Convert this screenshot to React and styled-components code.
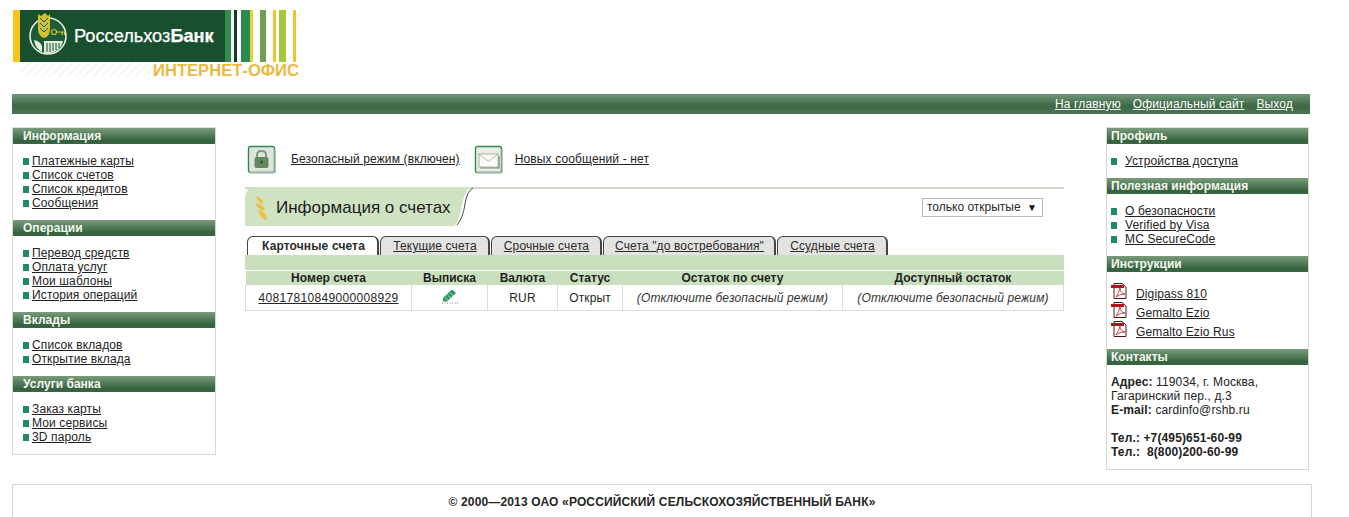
import styled, { createGlobalStyle } from "styled-components";

const GlobalStyle = createGlobalStyle`
  html, body {
    margin: 0;
    padding: 0;
    background: #fff;
    overflow: hidden;
  }

  body {
    font-family: "Liberation Sans", Arial, sans-serif;
    font-size: 12px;
    letter-spacing: 0.13px;
    color: #222;
  }

  a {
    color: inherit;
    text-decoration: underline;
  }
`;

const Page = styled.div`
  width: 1349px;
  height: 517px;
  overflow: hidden;
`;

const Header = styled.header`
  height: 94px;
  padding: 10px 0 0 13px;
  box-sizing: border-box;
`;

const TopBar = styled.nav`
  margin-left: 12px;
  width: 1298px;
  height: 20px;
  display: flex;
  justify-content: flex-end;
  align-items: center;
  gap: 12px;
  padding-right: 17px;
  box-sizing: border-box;
  color: #fff;
  background: linear-gradient(#70967a, #3c6844 60%, #4c7553);
`;

const Columns = styled.div`
  display: flex;
  align-items: flex-start;
  margin: 13px 0 0 12px;
`;

const Sidebar = styled.aside`
  flex: none;
  width: ${(p) => p.$width}px;
  box-sizing: border-box;
  border: 1px solid #d6d9cb;
  border-top-color: #dfe2d6;
  padding-bottom: ${(p) => p.$pad}px;
`;

const PanelTitle = styled.h3`
  margin: 0;
  height: 16px;
  line-height: 16px;
  padding-left: ${(p) => p.$indent}px;
  font-size: 12px;
  font-weight: bold;
  letter-spacing: 0.03px;
  color: #f2f6ee;
  background: linear-gradient(#7a9c7c, #35623e 80%, #3a6642);
`;

const LinkList = styled.ul`
  list-style: none;
  margin: 0;
  padding: 10px 0 10px ${(p) => p.$indent}px;
`;

const LinkItem = styled.li`
  display: flex;
  align-items: center;
  height: 14px;
  line-height: 14px;
`;

const Bullet = styled.i`
  flex: none;
  width: 6px;
  height: 7px;
  margin-right: ${(p) => p.$gap}px;
  background: #1f8a63;
`;

const PdfList = styled.ul`
  list-style: none;
  margin: 0;
  padding: 8px 0 12px 4px;
`;

const PdfItem = styled.li`
  display: flex;
  align-items: flex-end;
  gap: 8px;
  height: 19px;
  line-height: 14px;

  a {
    margin-bottom: -2px;
  }
`;

const Contacts = styled.div`
  padding: 10px 0 0 4px;
  line-height: 14px;

  b {
    font-weight: bold;
  }
`;

const Center = styled.main`
  flex: none;
  width: 819px;
  margin: 17px 42px 0 29px;
`;

const StatusRow = styled.div`
  display: flex;
  align-items: center;
  height: 30px;
  padding-left: 2px;
`;

const StatusIcon = styled.span`
  flex: none;
  display: flex;
  width: 29px;
  height: 29px;
  margin-right: ${(p) => p.$gap}px;
`;

const StatusLink = styled.a`
  margin-right: ${(p) => p.$gap}px;
`;

const TitleRow = styled.div`
  position: relative;
  display: flex;
  align-items: center;
  justify-content: space-between;
  margin-top: 13px;
  height: 39px;
  border-top: 2px solid #d3d7c7;
  box-sizing: border-box;
`;

const TitleTab = styled.div`
  display: flex;
  align-items: center;
  gap: 7px;
  height: 37px;
  width: 228px;
  padding-left: 9px;
  box-sizing: border-box;
  font-size: 17px;
  letter-spacing: 0;
  color: #1d1d1d;
`;

const TitleShape = styled.svg`
  position: absolute;
  left: 0;
  top: -2px;
  z-index: 0;
`;

const TitleInner = styled.span`
  position: relative;
  z-index: 1;
  display: flex;
  align-items: center;
`;

const FilterSelect = styled.div`
  display: flex;
  align-items: center;
  justify-content: space-between;
  width: 121px;
  height: 19px;
  margin: -1px 21px 0 0;
  padding: 0 5px 0 4px;
  box-sizing: border-box;
  border: 1px solid #b9b9b9;
  color: #2a2a2a;
  letter-spacing: 0;

  span {
    font-size: 10px;
    color: #111;
  }
`;

const Tabs = styled.div`
  display: flex;
  gap: 1px;
  margin: 10px 0 0 2px;
  height: 19px;
`;

const Tab = styled.a`
  display: block;
  height: 19px;
  line-height: 19px;
  box-sizing: border-box;
  width: ${(p) => p.$width}px;
  padding-left: ${(p) => (p.$active ? 2 : 1)}px;
  text-align: center;
  border: 1px solid #444;
  border-bottom: none;
  border-width: 1px 2px 0 1px;
  border-radius: 6px 6px 0 0;
  background: ${(p) => (p.$active ? "#fff" : "#e3e4e2")};
  font-weight: ${(p) => (p.$active ? "bold" : "normal")};
  text-decoration: ${(p) => (p.$active ? "none" : "underline")};
  color: #2b2b2b;
`;

const Band = styled.div`
  height: 15px;
  background: #c9dfbd;
`;

const AccountTable = styled.table`
  width: 818px;
  table-layout: fixed;
  border-collapse: collapse;
  margin-top: 1px;

  th {
    height: 14px;
    padding: 0;
    font-size: 12px;
    line-height: 14px;
    font-weight: bold;
    letter-spacing: 0.03px;
    color: #1f1f1f;
    background: #c9dfbd;
  }

  td {
    height: 25px;
    padding: 0;
    text-align: center;
    color: #262626;
    border: 1px solid #d9dcd2;
    border-top: none;
  }

  td em {
    color: #333;
  }
`;

const AccountNumber = styled.a`
  letter-spacing: 0.33px;
`;

const Footer = styled.footer`
  width: 1300px;
  height: 40px;
  margin: 14px 0 0 12px;
  padding-top: 10px;
  box-sizing: border-box;
  border: 1px solid #d6d9cb;
  text-align: center;
  font-weight: bold;
  letter-spacing: 0.15px;
  color: #262626;
`;

function Logo() {
  return (
    <svg width="300" height="70" viewBox="0 0 300 70">
      <defs>
        <pattern id="hatch" width="6" height="6" patternUnits="userSpaceOnUse" patternTransform="rotate(45)">
          <rect width="3" height="6" fill="#f8f9f6" />
        </pattern>
      </defs>
      <polygon points="283,0 295,0 283,18" fill="url(#hatch)" />
      <rect x="8" y="52" width="140" height="15" fill="url(#hatch)" />
      <rect x="0" y="0" width="7" height="52" fill="#f7c417" />
      <rect x="7" y="0" width="205" height="52" fill="#18502f" />
      <rect x="212" y="0" width="6" height="52" fill="#2f8f4a" />
      <rect x="221" y="0" width="3" height="52" fill="#15382a" />
      <rect x="228" y="0" width="9" height="52" fill="#2a8a4c" />
      <rect x="237" y="0" width="3" height="52" fill="#e9cf3b" />
      <rect x="247" y="0" width="6" height="52" fill="#6f9e54" />
      <rect x="260" y="0" width="3" height="52" fill="#f4c32c" />
      <rect x="266" y="0" width="7" height="52" fill="#a3c83c" />
      <rect x="280" y="0" width="3" height="52" fill="#f4c32c" />

      <circle cx="35" cy="26" r="18" fill="#1d5a35" stroke="#e4efe0" strokeWidth="1.6" />
      <path d="M25 4 L28 6 L32 3 L35 6 L37 4 V18 Q37 27 31 28 Q25 26 25 18 Z" fill="#d2c22f" />
      <path d="M27 8 l4 4 l4 -4 M27 13 l4 4 l4 -4 M27 18 l4 4 l4 -4" fill="none" stroke="#18502f" strokeWidth="1" />
      <circle cx="41" cy="22" r="2.5" fill="none" stroke="#d2c22f" strokeWidth="1.2" />
      <path d="M43.5 22 H52 M49 22 v3 M51.5 22 v3" stroke="#d2c22f" strokeWidth="1.2" fill="none" />
      <path d="M21 30 Q27 31 29 36 V42 Q22 38 21 30 Z" fill="#e4efe0" />
      <path d="M31 31 H50 Q48 41 36 43.5 H31 Z" fill="#e4efe0" />
      <path d="M34 33 V42 M37 33 V42 M40 33 V41 M43 33 V40 M46 33 V38" stroke="#1d5a35" strokeWidth="1.1" />

      <text x="61" y="32" fontFamily="Liberation Sans, Arial, sans-serif" fontSize="18.2" letterSpacing="0" fill="#fff" stroke="#fff" strokeWidth="0.25">
        Россельхоз<tspan fontWeight="bold">Банк</tspan>
      </text>
      <text x="140" y="66" fontFamily="Liberation Sans, Arial, sans-serif" fontSize="16.6" letterSpacing="0" fontWeight="bold" fill="#eab942">
        ИНТЕРНЕТ-ОФИС
      </text>
    </svg>
  );
}

function PdfIcon() {
  return (
    <svg width="17" height="16" viewBox="0 0 17 16">
      <path d="M3 0.5 H11 L15 4 V15.5 H3 Z" fill="#fff" stroke="#4a1a1a" strokeWidth="1" />
      <rect x="0" y="2" width="13" height="3" fill="#b3141d" />
      <path d="M5 14 Q8 10 9 5 Q9 10 14 11 Q9 10.5 5 14 Z" fill="none" stroke="#c9303a" strokeWidth="0.9" />
    </svg>
  );
}

function LockIcon() {
  return (
    <svg width="29" height="29" viewBox="0 0 29 29">
      <rect x="1.5" y="1.5" width="26" height="26" rx="2" fill="#dfe5da" stroke="#2f8a58" strokeWidth="1.4" />
      <path d="M3 27.5 H28 V4" fill="none" stroke="#a9b5a6" strokeWidth="1.4" />
      <path d="M10 13 V10 Q10 6 14.5 6 Q19 6 19 10 V13" fill="none" stroke="#7c9a7e" strokeWidth="2" />
      <rect x="7.5" y="12" width="14" height="11" rx="2" fill="#5f8a63" />
      <circle cx="14.5" cy="17" r="1.5" fill="#2f5a36" />
    </svg>
  );
}

function MailIcon() {
  return (
    <svg width="29" height="29" viewBox="0 0 29 29">
      <rect x="1.5" y="1.5" width="26" height="26" rx="2" fill="#e9ede4" stroke="#2f8a58" strokeWidth="1.4" />
      <path d="M3 27.5 H28 V4" fill="none" stroke="#a9b5a6" strokeWidth="1.4" />
      <rect x="5" y="9" width="19" height="13" fill="#fdfdf8" stroke="#9aa396" strokeWidth="0.8" />
      <path d="M5 9 L14.5 16.5 L24 9" fill="none" stroke="#9aa396" strokeWidth="0.8" />
      <path d="M6 23 H25 V11" fill="none" stroke="#7d8a78" strokeWidth="1.2" />
    </svg>
  );
}

function WheatMark() {
  return (
    <svg width="15" height="26" viewBox="0 0 15 26">
      <path d="M2 1 Q9 3 9 9 Q4 8 2 1 Z M1 8 Q10 9 11 16 Q4 15 1 8 Z M4 15 Q13 17 13 25 Q6 23 4 15 Z" fill="#f0bf3c" />
    </svg>
  );
}

function StatementIcon() {
  return (
    <svg width="18" height="16" viewBox="0 0 18 16">
      <path d="M2 10 L11 1.5 L15 5 L6 13.5 L2 13.5 Z" fill="#2f9a5c" />
      <path d="M4 9.5 L8 13 M6.5 7 L10.5 10.5 M9 5 L13 8" stroke="#c8e6cf" strokeWidth="0.8" />
      <path d="M1 15 H17" stroke="#555" strokeWidth="0.8" strokeDasharray="1 1.5" />
    </svg>
  );
}

function Links({ items, indent, gap }) {
  return (
    <LinkList $indent={indent}>
      {items.map((item) => (
        <LinkItem key={item}>
          <Bullet $gap={gap} />
          <a href="#">{item}</a>
        </LinkItem>
      ))}
    </LinkList>
  );
}

const leftMenu = [
  ["Информация", ["Платежные карты", "Список счетов", "Список кредитов", "Сообщения"]],
  ["Операции", ["Перевод средств", "Оплата услуг", "Мои шаблоны", "История операций"]],
  ["Вклады", ["Список вкладов", "Открытие вклада"]],
  ["Услуги банка", ["Заказ карты", "Мои сервисы", "3D пароль"]],
];

const tabs = [
  ["Карточные счета", 132, true],
  ["Текущие счета", 110],
  ["Срочные счета", 111],
  ['Счета "до востребования"', 173],
  ["Ссудные счета", 111],
];

export default function App() {
  return (
    <Page>
      <GlobalStyle />
      <Header>
        <Logo />
      </Header>

      <TopBar>
        <a href="#">На главную</a>
        <a href="#">Официальный сайт</a>
        <a href="#">Выход</a>
      </TopBar>

      <Columns>
        <Sidebar $width={204} $pad={0}>
          {leftMenu.map(([title, items]) => (
            <section key={title}>
              <PanelTitle $indent={10}>{title}</PanelTitle>
              <Links items={items} indent={10} gap={3} />
            </section>
          ))}
        </Sidebar>

        <Center>
          <StatusRow>
            <StatusIcon $gap={15}>
              <LockIcon />
            </StatusIcon>
            <StatusLink href="#" $gap={14}>
              Безопасный режим (включен)
            </StatusLink>
            <StatusIcon $gap={12}>
              <MailIcon />
            </StatusIcon>
            <StatusLink href="#" $gap={0}>
              Новых сообщений - нет
            </StatusLink>
          </StatusRow>

          <TitleRow>
            <TitleShape width="230" height="39" viewBox="0 0 230 39">
              <path d="M0 39 V12 Q0 0 12 0 H225 Q219 6 217 18 Q215 30 210 39 Z" fill="#cfe2c2" />
              <path d="M228 1 Q222 4 220 17 Q218 31 212 38" fill="none" stroke="#4a4a42" strokeWidth="1" />
            </TitleShape>
            <TitleTab>
              <TitleInner>
                <WheatMark />
              </TitleInner>
              <TitleInner>Информация о счетах</TitleInner>
            </TitleTab>
            <FilterSelect>
              только открытые
              <span>▼</span>
            </FilterSelect>
          </TitleRow>

          <Tabs>
            {tabs.map(([label, width, active]) => (
              <Tab key={label} href="#" $width={width} $active={active}>
                {label}
              </Tab>
            ))}
          </Tabs>
          <Band />

          <AccountTable>
            <colgroup>
              <col width="166" />
              <col width="76" />
              <col width="70" />
              <col width="65" />
              <col width="220" />
              <col width="221" />
            </colgroup>
            <thead>
              <tr>
                <th>Номер счета</th>
                <th>Выписка</th>
                <th>Валюта</th>
                <th>Статус</th>
                <th>Остаток по счету</th>
                <th>Доступный остаток</th>
              </tr>
            </thead>
            <tbody>
              <tr>
                <td>
                  <AccountNumber href="#">40817810849000008929</AccountNumber>
                </td>
                <td>
                  <StatementIcon />
                </td>
                <td>RUR</td>
                <td>Открыт</td>
                <td>
                  <em>(Отключите безопасный режим)</em>
                </td>
                <td>
                  <em>(Отключите безопасный режим)</em>
                </td>
              </tr>
            </tbody>
          </AccountTable>
        </Center>

        <Sidebar $width={203} $pad={10}>
          <PanelTitle $indent={4}>Профиль</PanelTitle>
          <Links items={["Устройства доступа"]} indent={4} gap={8} />
          <PanelTitle $indent={4}>Полезная информация</PanelTitle>
          <Links items={["О безопасности", "Verified by Visa", "MC SecureCode"]} indent={4} gap={8} />
          <PanelTitle $indent={4}>Инструкции</PanelTitle>
          <PdfList>
            {["Digipass 810", "Gemalto Ezio", "Gemalto Ezio Rus"].map((doc) => (
              <PdfItem key={doc}>
                <PdfIcon />
                <a href="#">{doc}</a>
              </PdfItem>
            ))}
          </PdfList>
          <PanelTitle $indent={4}>Контакты</PanelTitle>
          <Contacts>
            <b>Адрес:</b> 119034, г. Москва,
            <br />
            Гагаринский пер., д.3
            <br />
            <b>E-mail:</b> cardinfo@rshb.ru
            <br />
            <br />
            <b>Тел.: +7(495)651-60-99</b>
            <br />
            <b>Тел.:&nbsp; 8(800)200-60-99</b>
          </Contacts>
        </Sidebar>
      </Columns>

      <Footer>© 2000—2013 ОАО «РОССИЙСКИЙ СЕЛЬСКОХОЗЯЙСТВЕННЫЙ БАНК»</Footer>
    </Page>
  );
}
